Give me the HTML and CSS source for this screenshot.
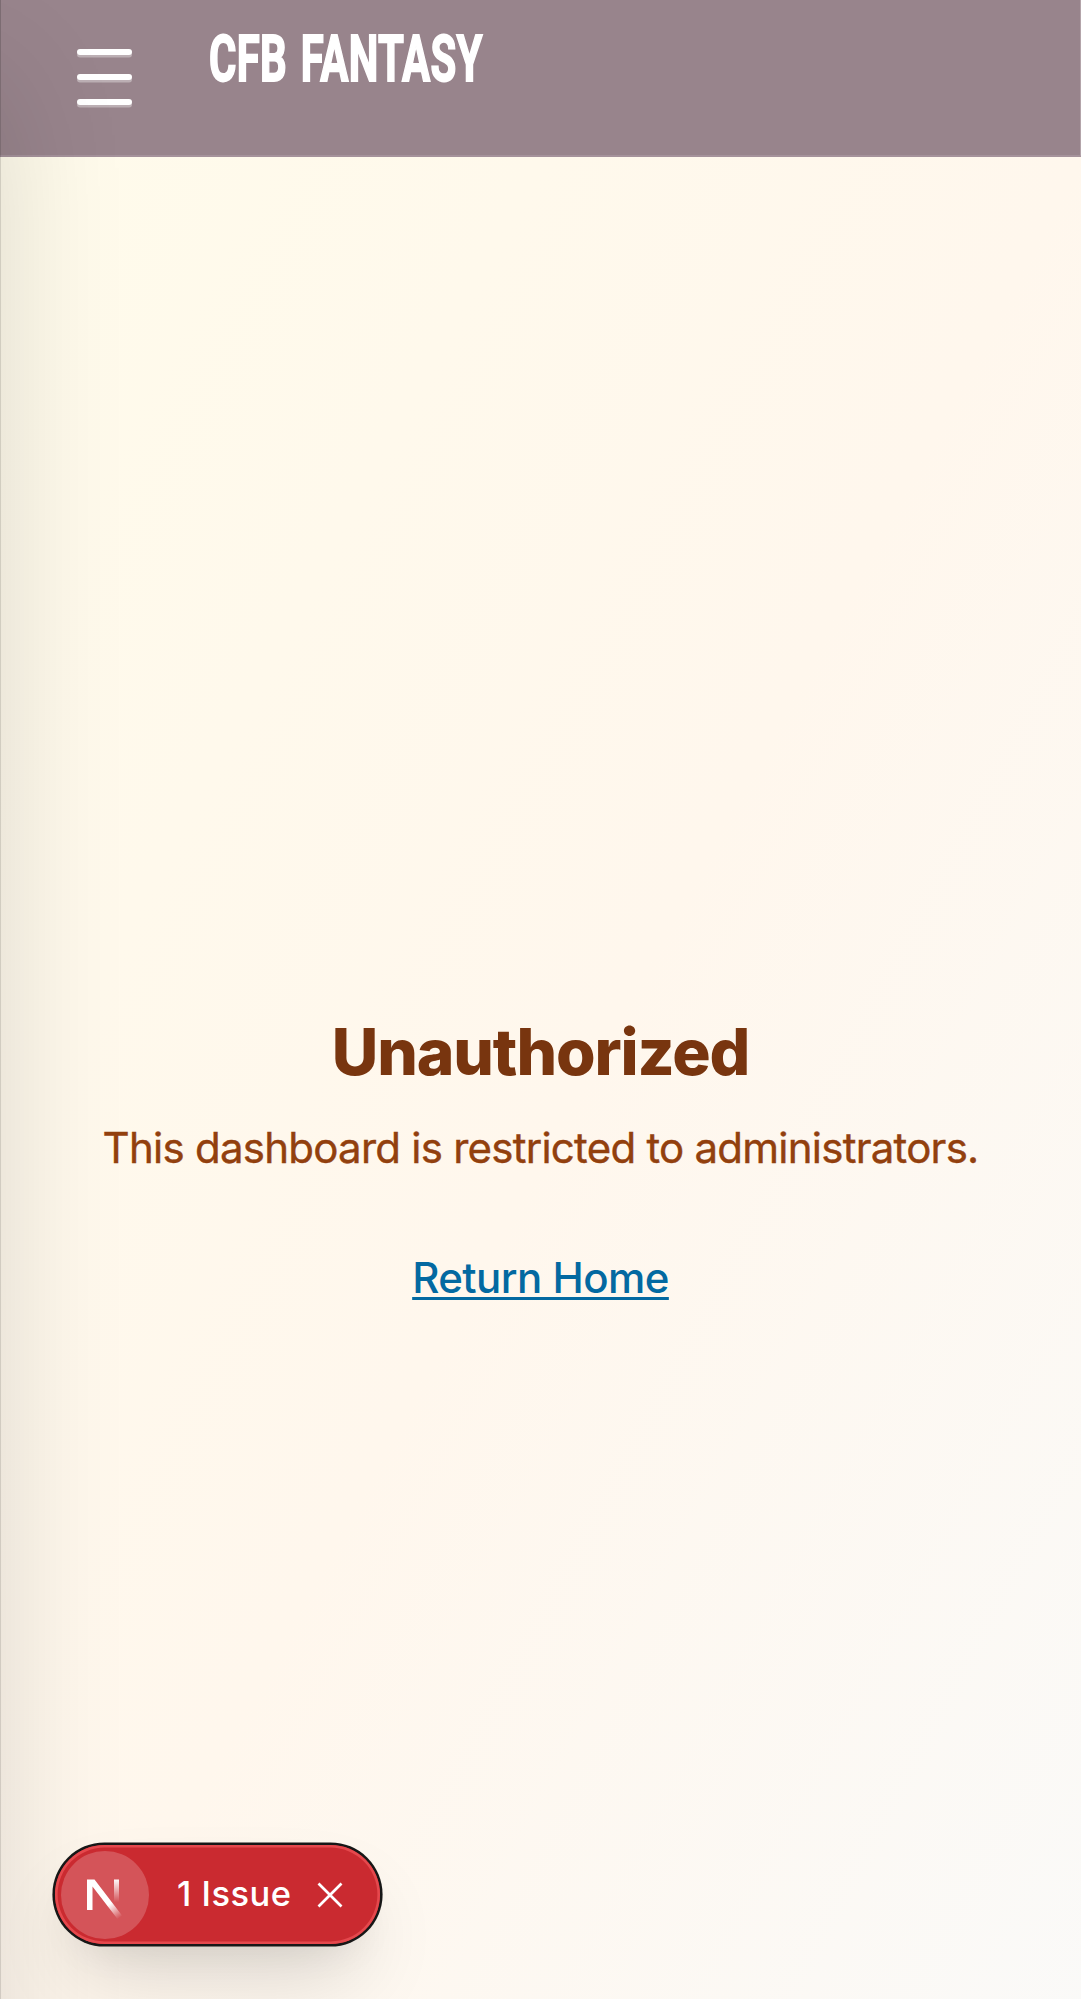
FILE: index.html
```html
<!DOCTYPE html>
<html lang="en">
<head>
<meta charset="utf-8">
<title>CFB Fantasy</title>
<link rel="stylesheet" href="styles.css">
</head>
<body>
<div class="page">
  <header class="header">
    <button class="menu" aria-label="Open menu"><span class="bar"></span><span class="bar"></span><span class="bar"></span></button>
    <span class="brand">CFB FANTASY</span>
  </header>
  <main class="main">
    <h1 class="title">Unauthorized</h1>
    <p class="message">This dashboard is restricted to administrators.</p>
    <a class="home" href="#">Return Home</a>
  </main>
  <div class="drawer-shadow"></div>
  <div class="issues">
    <span class="logo">
      <svg width="88" height="88" viewBox="0 0 88 88" fill="none">
        <defs>
          <linearGradient id="diag" x1="50" y1="52" x2="60" y2="66" gradientUnits="userSpaceOnUse"><stop stop-color="#fff"/><stop offset="1" stop-color="#fff" stop-opacity="0"/></linearGradient>
          <linearGradient id="stem" x1="0" y1="28" x2="0" y2="51" gradientUnits="userSpaceOnUse"><stop stop-color="#fff"/><stop offset="1" stop-color="#fff" stop-opacity="0"/></linearGradient>
        </defs>
        <path d="M26 28.500h7.500L61 64.500l-4.500 3.500L31.500 35.500V59H26z" fill="url(#diag)"/>
        <path d="M53 28.500h5V51h-5z" fill="url(#stem)"/>
      </svg>
    </span>
    <span class="count">1 Issue</span>
    <svg class="close" width="26" height="26" viewBox="0 0 26 26" fill="none" stroke="#fff" stroke-width="2.700"><path d="M1.500 1.500l23 23M24.500 1.500l-23 23"/></svg>
  </div>
</div>
</body>
</html>
```
FILE: styles.css
```css
* { box-sizing: border-box; }
body { margin: 0; font-family: Inter, sans-serif; }
.page {
  position: relative;
  display: flex;
  flex-direction: column;
  height: 1999px;
  overflow: hidden;
}
.header {
  display: flex;
  flex: none;
  align-items: flex-start;
  height: 157px;
  padding: 28px 0 0 77px;
  background: #98848c;
  border-right: 1px solid #b3a4aa;
  border-bottom: 2px solid #a5929b;
}
.menu {
  display: flex;
  flex-direction: column;
  gap: 19px;
  margin: 21px 77px 0 0;
  padding: 0;
  border: 0;
  background: none;
}
.bar {
  width: 55px;
  height: 6px;
  border-radius: 3px;
  background: #fff;
  box-shadow: 0 2.600px 0 rgba(255, 255, 255, .35);
}
.brand {
  color: #fff;
  font: 700 65px/60px Roboto, sans-serif;
  letter-spacing: .4px;
  word-spacing: 5px;
  white-space: nowrap;
  -webkit-text-stroke: 1.800px #fff;
  transform: translateY(.5px) scaleX(.645);
  transform-origin: left center;
}
.main {
  display: flex;
  flex: none;
  flex-direction: column;
  align-items: center;
  height: 1999px;
  padding-top: 853px;
  background: linear-gradient(to bottom right, #fffbeb, #fff7ed 50%, #fafaf9);
}
.title {
  margin: 0;
  color: #78350f;
  font-size: 64px;
  line-height: 84px;
  font-weight: 800;
  letter-spacing: -1.100px;
  white-space: nowrap;
}
.message {
  margin: 12px 0 0;
  color: #92400e;
  font-size: 42px;
  line-height: 84px;
  letter-spacing: -.75px;
  -webkit-text-stroke: .4px #92400e;
  white-space: nowrap;
}
.home {
  margin-top: 46px;
  color: #0369a1;
  font-size: 42px;
  line-height: 84px;
  font-weight: 500;
  letter-spacing: -.55px;
  text-underline-offset: 3.500px;
  text-decoration-thickness: 2.600px;
  text-decoration-skip-ink: none;
  white-space: nowrap;
}
.drawer-shadow {
  position: absolute;
  top: 0;
  bottom: -300px;
  left: -700px;
  width: 701px;
  border-right: 1px solid rgba(0, 0, 0, .18);
  box-shadow: 0 80px 120px rgba(0, 0, 0, .14);
}
.issues {
  position: absolute;
  left: 55px;
  top: 1845px;
  display: flex;
  align-items: center;
  width: 325px;
  height: 99px;
  padding-left: 6px;
  border-radius: 50px;
  background: #ca2a30;
  box-shadow: inset 0 0 0 2.600px #e5484d, 0 0 0 2.600px #171717, 0 42px 84px -21px rgba(0, 0, 0, .2), 0 21px 42px -21px rgba(0, 0, 0, .1);
}
.logo {
  width: 88px;
  height: 88px;
  border-radius: 50%;
  background: rgba(255, 255, 255, .2);
}
.count {
  width: 114px;
  margin: -2px 26px 0 28px;
  color: #fff;
  font-size: 34.500px;
  line-height: 44px;
  font-weight: 500;
  letter-spacing: .5px;
  white-space: nowrap;
}
```
